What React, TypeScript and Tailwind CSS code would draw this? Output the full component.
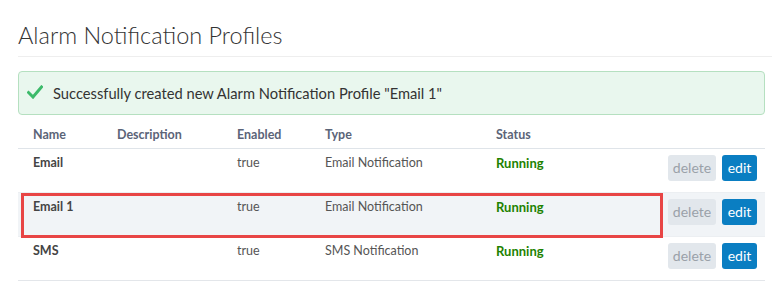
import * as React from "react";

type Profile = { name: string; description: string; enabled: string; type: string; status: string };

const profiles: Profile[] = [
  { name: "Email", description: "", enabled: "true", type: "Email Notification", status: "Running" },
  { name: "Email 1", description: "", enabled: "true", type: "Email Notification", status: "Running" },
  { name: "SMS", description: "", enabled: "true", type: "SMS Notification", status: "Running" },
];

function Row({ p, highlighted }: { p: Profile; highlighted?: boolean }) {
  return (
    <div className={`relative flex h-[44px] ${highlighted ? "bg-[#f1f4f7]" : ""} border-b border-[#eceff2] last:border-[#e3e6ea]`}>
      <div className="w-[99px] pl-[15px] pt-[5px] font-bold text-[#444]">{p.name}</div>
      <div className="w-[120px] pt-[5px]">{p.description}</div>
      <div className="w-[88px] pt-[5px] text-[#555]">{p.enabled}</div>
      <div className="w-[171px] pt-[5px] text-[#555]">{p.type}</div>
      <div className="w-[160px] pt-[5px] text-[13px] font-bold text-[#1e8200]">{p.status}</div>
      <div className="flex-1 flex justify-end items-center gap-[6px] pr-[8px] pb-[6px]">
        <button className="h-[26px] w-[48px] rounded-[3px] bg-[#e2e7ec] text-[#9aa1a9] text-[14px]">delete</button>
        <button className="h-[26px] w-[35px] rounded-[3px] bg-[#0a7ec2] text-white text-[14px]">edit</button>
      </div>
      {highlighted && (
        <div className="absolute left-[3px] top-0 w-[642px] h-[45px] border-[3px] border-[#e84545] pointer-events-none" />
      )}
    </div>
  );
}

export default function App() {
  return (
    <div className="w-[772px] h-[288px] bg-white overflow-hidden pl-[18px] pr-[7px] pt-[20px] text-[12.5px] text-[#333]" style={{ fontFamily: 'Lato, "Noto Sans", sans-serif' }}>
      <h1 className="text-[23.5px] font-light leading-[30px] text-[#333] pb-[6px] border-b border-[#eee] -mr-[7px]">
        Alarm Notification Profiles
      </h1>
      <div className="mt-[14px] h-[44px] rounded-[4px] border border-[#b5e0c0] bg-[#e9f7ee] flex items-center pl-[8px] text-[14.7px] text-[#333]">
        <svg width="16" height="14" viewBox="0 0 16 14" className="mr-[10px] mb-[3px]">
          <path d="M1.5 7.5 L6 12 L14.5 2" fill="none" stroke="#3cba6a" strokeWidth="3" strokeLinecap="square" />
        </svg>
        Successfully created new Alarm Notification Profile "Email 1"
      </div>
      <div className="mt-[7px]">
        <div className="flex h-[27px] items-center border-b border-[#dfe4e9] font-bold text-[#5b6478]">
          <div className="w-[99px] pl-[15px]">Name</div>
          <div className="w-[120px]">Description</div>
          <div className="w-[88px]">Enabled</div>
          <div className="w-[171px]">Type</div>
          <div className="w-[160px]">Status</div>
        </div>
        {profiles.map((p, i) => (
          <Row key={p.name} p={p} highlighted={i === 1} />
        ))}
      </div>
    </div>
  );
}
